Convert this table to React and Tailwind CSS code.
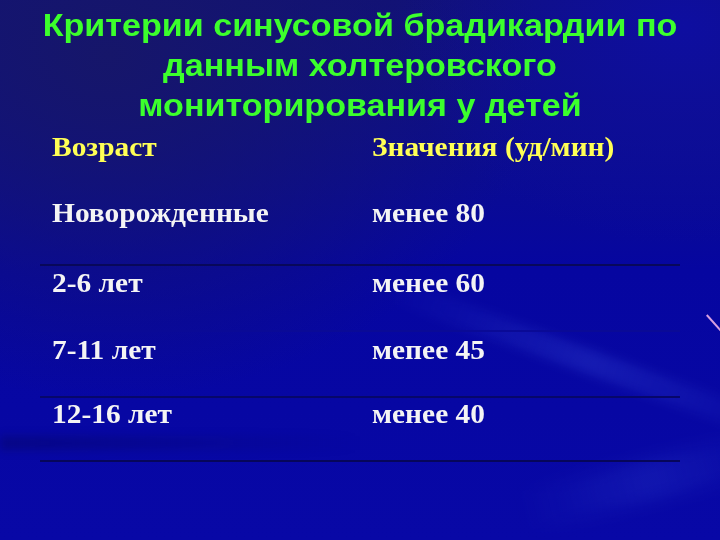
import React from "react";

const rows = [
  { age: "Новорожденные", value: "менее 80", pt: "pt-[31px]", h: "h-[99px]", border: "border-[#08085a]" },
  { age: "2-6 лет", value: "менее 60", pt: "pt-[2px]", h: "h-[66px]", border: "border-[#0a0a96]" },
  { age: "7-11 лет", value: "мепее 45", pt: "pt-[3px]", h: "h-[66px]", border: "border-[#07076a]" },
  { age: "12-16 лет", value: "менее 40", pt: "pt-[1px]", h: "h-[64px]", border: "border-[#06065a]" },
];

const App = () => {
  return (
    <div className="relative w-[720px] h-[540px] overflow-hidden bg-gradient-to-b from-[#10107a] via-[#0606a0] to-[#0808a6]">
      {/* decorative streaks */}
      <div className="absolute inset-0 bg-[radial-gradient(ellipse_at_15%_10%,#16166a_0%,transparent_50%)]" />
      <div className="absolute inset-0 bg-[radial-gradient(ellipse_at_95%_5%,#0e0ea0_0%,transparent_30%)]" />
      <div className="absolute left-[380px] top-[350px] w-[420px] h-[24px] rotate-[20deg] bg-gradient-to-r from-transparent via-[#3040d0]/35 to-transparent blur-[5px]" />
      <div className="absolute left-[520px] top-[460px] w-[260px] h-[40px] -rotate-[14deg] bg-gradient-to-r from-transparent via-[#2838c8]/30 to-transparent blur-[8px]" />
      <div className="absolute left-[0px] top-[436px] w-[360px] h-[14px] bg-gradient-to-r from-[#05055a]/40 to-transparent blur-[4px]" />
      <div className="absolute left-[703px] top-[323px] w-[24px] h-[1.5px] rotate-[48deg] bg-[#d8a0e0]" />

      <div className="relative flex flex-col">
        <h1 className="pt-[6px] h-[127px] text-center text-[31px] leading-[40px] font-bold text-[#3cff2c] font-['Liberation_Sans',Arial,sans-serif] scale-x-[1.1]">
          Критерии синусовой брадикардии по
          <br />
          данным холтеровского
          <br />
          мониторирования у детей
        </h1>

        <div className="mx-[40px] font-['Liberation_Serif','Times_New_Roman',serif] font-bold text-[27px] leading-[30px]">
          <div className="grid grid-cols-[320px_1fr] h-[40px] items-center px-[12px] text-[#ffff55]">
            <span className="inline-block origin-left scale-x-[1.09]">Возраст</span>
            <span className="inline-block origin-left scale-x-[1.09]">Значения (уд/мин)</span>
          </div>
          {rows.map((r) => (
            <div
              key={r.age}
              className={`grid grid-cols-[320px_1fr] items-start px-[12px] text-[#f4f4f4] border-b-2 ${r.pt} ${r.h} ${r.border}`}
            >
              <span className="inline-block origin-left scale-x-[1.09]">{r.age}</span>
              <span className="inline-block origin-left scale-x-[1.09]">{r.value}</span>
            </div>
          ))}
        </div>
      </div>
    </div>
  );
};

export default App;
